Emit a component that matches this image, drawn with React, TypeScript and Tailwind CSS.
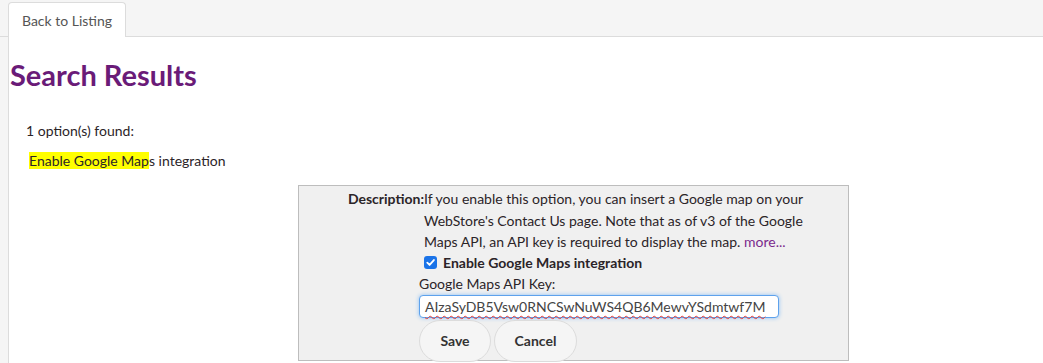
import React from 'react';

export default function App() {
  return (
    <div className="min-h-[363px] h-[363px] overflow-hidden bg-[#f5f5f5] flex flex-col font-['Lato','Noto_Sans',sans-serif] text-[#2b2428]">
      <div className="h-[37px] shrink-0 border-b border-[#dcdcdc] pl-2 flex items-end">
        <div className="h-[35px] w-[118px] -mb-px bg-white border border-b-0 border-[#dcdcdc] rounded-t-[4px] flex items-center justify-center text-[14px] text-[#555]">
          Back to Listing
        </div>
      </div>

      <div className="flex-1 ml-2 border-l border-[#dcdcdc] bg-white">
        <h1 className="mt-[21px] ml-px text-[29px] leading-[34px] font-bold text-[#6a1b78]">Search Results</h1>

        <p className="mt-[30px] ml-[17px] text-[14px] leading-[18px]">1 option(s) found:</p>

        <p className="mt-[11px] ml-[20px] text-[14px] leading-[20px]">
          <span className="bg-[#ffff00]">Enable Google Map</span>s integration
        </p>

        <div className="mt-[14px] ml-[289px] w-[551px] h-[176px] bg-[#f0f0f0] border border-[#bdbdbd] flex text-[14px]">
          <div className="w-[125px] shrink-0 text-right font-bold leading-[21px] pt-[2px]">Description:</div>
          <div className="flex-1 flex flex-col">
            <p className="leading-[21.5px] pt-[2px]">
              If you enable this option, you can insert a Google map on your
              <br />
              WebStore's Contact Us page. Note that as of v3 of the Google
              <br />
              Maps API, an API key is required to display the map.{' '}
              <span className="text-[#7b2a8c]">more...</span>
            </p>
            <label className="flex items-center gap-[6px] leading-[20px] font-bold">
              <span className="w-[13px] h-[13px] rounded-[3px] bg-[#1a73e8] flex items-center justify-center">
                <svg viewBox="0 0 12 12" className="w-[11px] h-[11px]" fill="none" stroke="white" strokeWidth="2" strokeLinecap="round" strokeLinejoin="round">
                  <path d="M2.5 6.2 L5 8.7 L9.7 3.3" />
                </svg>
              </span>
              Enable Google Maps integration
            </label>
            <div className="-ml-[5px] mt-[1px] leading-[20px]">Google Maps API Key:</div>
            <div className="-ml-[5px] mt-[1px] w-[360px] h-[28px] bg-white border border-[#5ea2ec] rounded-[4px] shadow-[0_0_4px_#8ec1f5] flex items-center px-[5px] text-[14px] text-[#444]">
              <span className="underline decoration-wavy decoration-[#e53935] decoration-1 underline-offset-[3px]">AIzaSyDB5Vsw0RNCSwNuWS4QB6MewvYSdmtwf7M</span>
            </div>
            <div className="-ml-[5px] mt-[2px] flex gap-[3px]">
              <button className="w-[72px] h-[42px] rounded-full border border-[#dcdcdc] bg-[#f5f5f5] font-bold text-[14px] text-[#333]">Save</button>
              <button className="w-[83px] h-[42px] rounded-full border border-[#dcdcdc] bg-[#f5f5f5] font-bold text-[14px] text-[#333]">Cancel</button>
            </div>
          </div>
        </div>
      </div>
    </div>
  );
}
